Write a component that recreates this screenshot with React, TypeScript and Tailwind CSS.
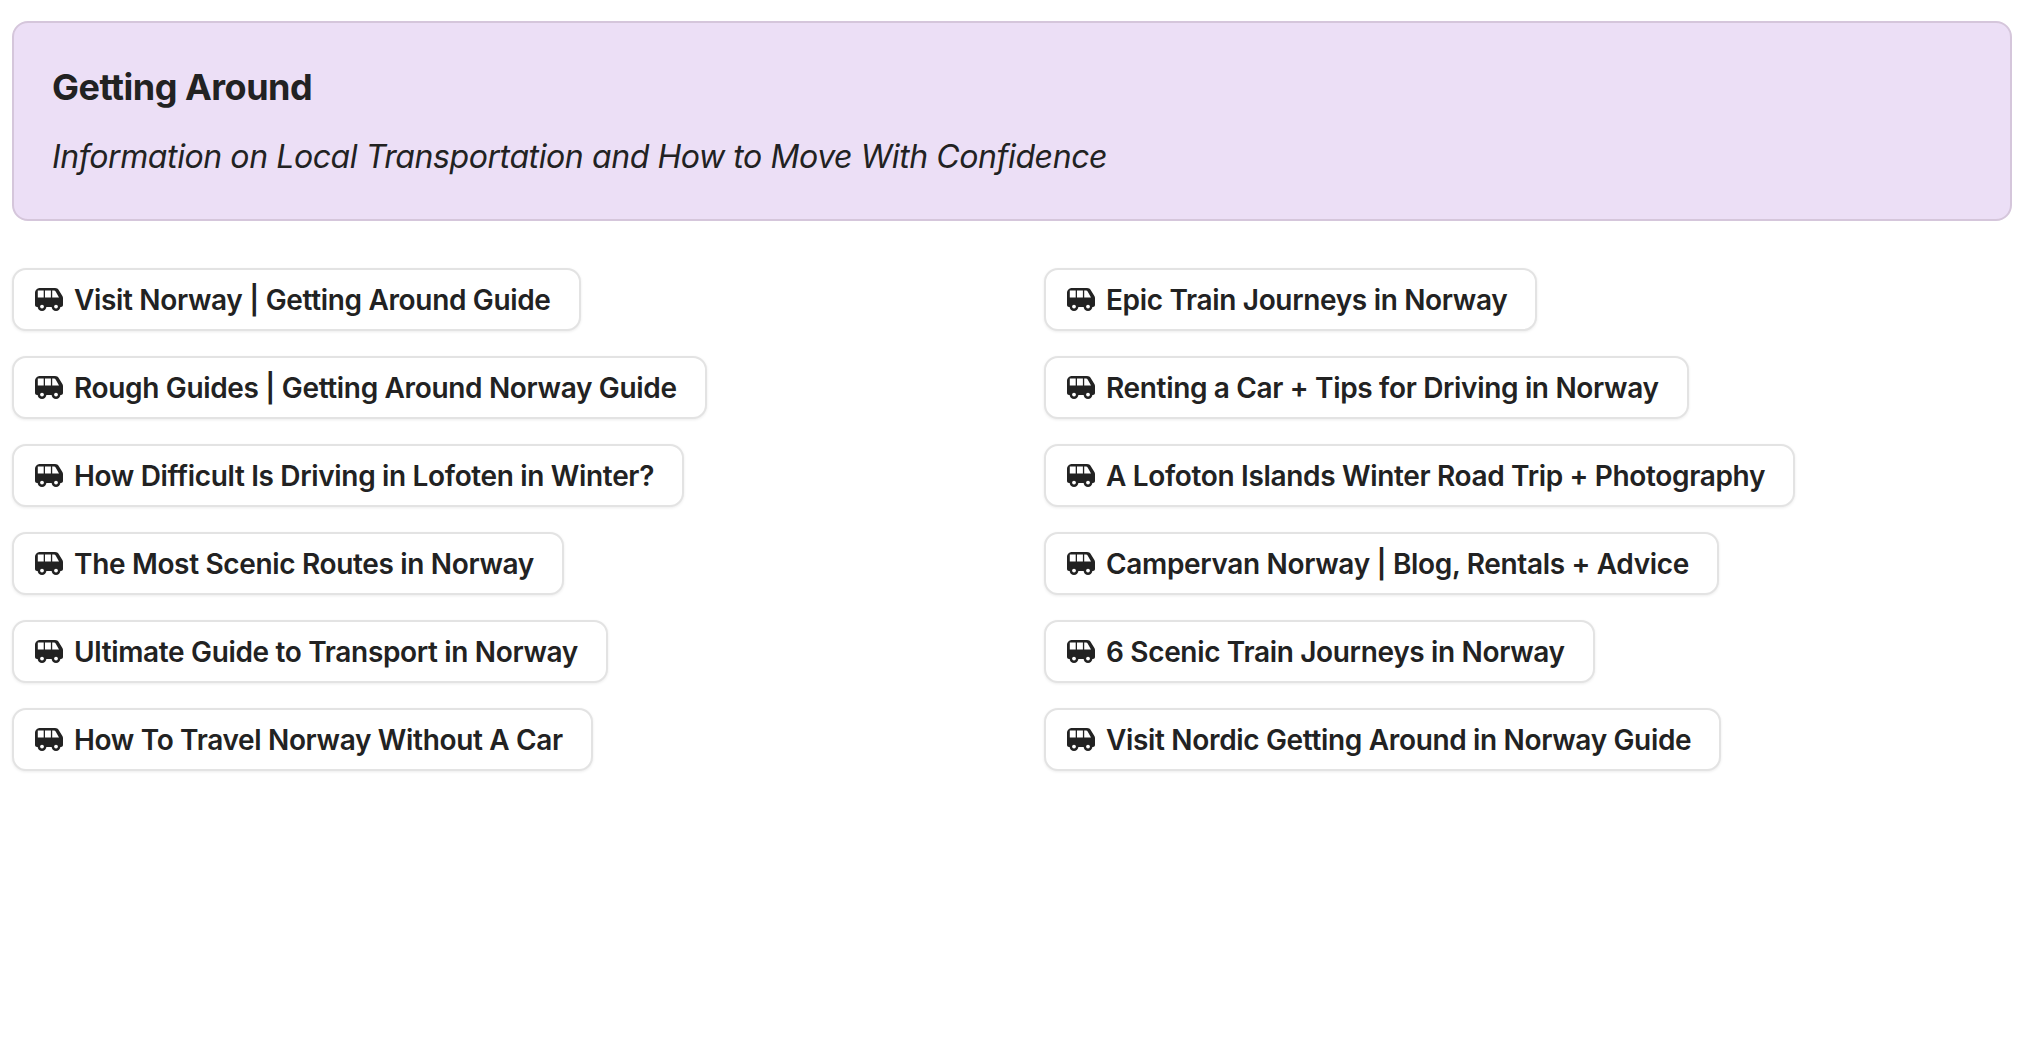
const left = [
  'Visit Norway | Getting Around Guide',
  'Rough Guides | Getting Around Norway Guide',
  'How Difficult Is Driving in Lofoten in Winter?',
  'The Most Scenic Routes in Norway',
  'Ultimate Guide to Transport in Norway',
  'How To Travel Norway Without A Car',
];

const right = [
  'Epic Train Journeys in Norway',
  'Renting a Car + Tips for Driving in Norway',
  'A Lofoton Islands Winter Road Trip + Photography',
  'Campervan Norway | Blog, Rentals + Advice',
  '6 Scenic Train Journeys in Norway',
  'Visit Nordic Getting Around in Norway Guide',
];

function BusIcon() {
  return (
    <svg viewBox="0 0 28 23" className="h-[23px] w-[28px] shrink-0" fill="currentColor">
      <path
        fillRule="evenodd"
        d="M5 0H20C21.8 0 23 .8 24 2.4L27.4 8C27.8 8.7 28 9.4 28 10.2V17C28 18.2 27 19 26 19H2C.9 19 0 18.1 0 17V5C0 2.2 2.2 0 5 0ZM2.8 2.6V9.6H8.7V2.6ZM10 2.6V9.6H15.9V2.6ZM17.2 2.6V9.6H24L20.8 3.8C20.3 3 19.8 2.6 19 2.6Z"
      />
      <circle cx="7" cy="18.6" r="4.4" />
      <circle cx="21" cy="18.6" r="4.4" />
      <circle cx="7" cy="18.6" r="1.9" fill="white" />
      <circle cx="21" cy="18.6" r="1.9" fill="white" />
    </svg>
  );
}

function LinkPill({ label }: { label: string }) {
  return (
    <a className="flex h-[63px] w-fit items-center gap-[11px] rounded-[14px] border-2 border-[#e3e3e3] bg-white pl-[21px] pr-[28px] text-[28px] font-semibold tracking-[-0.012em] text-[#222222] shadow-[0_1px_3px_rgba(0,0,0,0.08)]">
      <BusIcon />
      <span>{label}</span>
    </a>
  );
}

export default function App() {
  return (
    <div className="min-h-[1054px] bg-white pl-[12px] pr-[18px] pt-[21px] font-['Inter',sans-serif] text-[#222222]">
      {/* Header panel */}
      <div className="h-[200px] rounded-[16px] border-2 border-[#d5c6db] bg-[#ecdff6] px-[38px] pt-[42px]">
        <h1 className="text-[36px] leading-[44px] font-bold tracking-[-0.014em]">Getting Around</h1>
        <p className="mt-[26px] text-[32px] leading-[44px] tracking-[-0.013em] italic">
          Information on Local Transportation and How to Move With Confidence
        </p>
      </div>

      {/* Link columns */}
      <div className="mt-[47px] grid grid-cols-[1032px_1fr]">
        <div className="flex flex-col gap-[25px]">
          {left.map((label) => (
            <LinkPill key={label} label={label} />
          ))}
        </div>
        <div className="flex flex-col gap-[25px]">
          {right.map((label) => (
            <LinkPill key={label} label={label} />
          ))}
        </div>
      </div>
    </div>
  );
}
